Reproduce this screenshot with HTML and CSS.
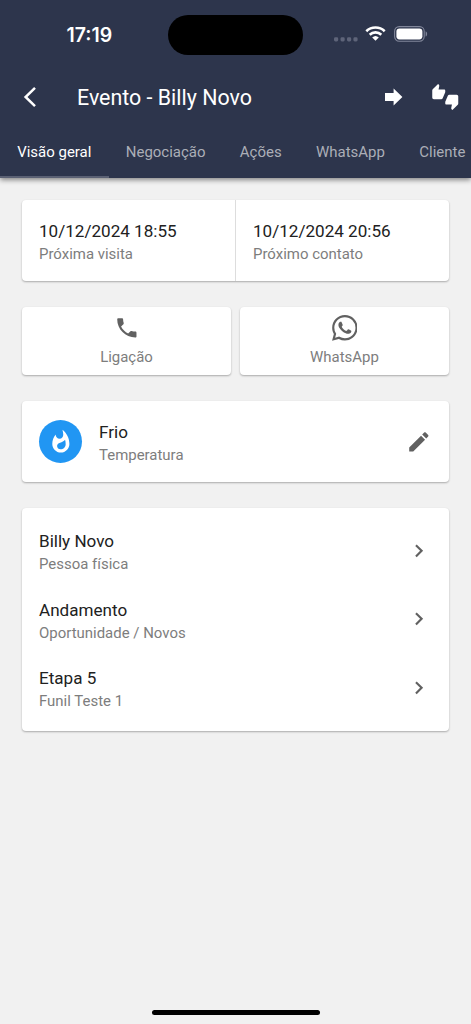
FILE: index.html
```html
<!DOCTYPE html>
<html lang="pt-BR">
<head>
<meta charset="utf-8">
<title>Evento - Billy Novo</title>
<link rel="stylesheet" href="styles.css">
</head>
<body>
<div class="screen">
  <header class="header">
    <div class="status">
      <span class="clock">17:19</span>
      <span class="island"></span>
      <span class="indicators">
        <svg class="dots" viewBox="0 0 24 5"><rect x="0" y=".3" width="4.2" height="4.2" rx="1.4"/><rect x="6.5" y=".3" width="4.2" height="4.2" rx="1.4"/><rect x="13" y=".3" width="4.2" height="4.2" rx="1.4"/><rect x="19.4" y=".3" width="4.2" height="4.2" rx="1.4"/></svg>
        <svg class="wifi" viewBox="0 0 21 15"><path d="M1.3 5.2a13.3 13.3 0 0 1 18.4 0M4.7 8.7a8.4 8.4 0 0 1 11.6 0" fill="none" stroke="#fff" stroke-width="2.6"/><path d="M10.5 14.8 7.2 11.5a4.8 4.8 0 0 1 6.6 0z" fill="#fff"/></svg>
        <svg class="battery" viewBox="0 0 34 16"><rect x=".6" y=".6" width="29.6" height="14.6" rx="4.6" fill="none" stroke="#81869a" stroke-width="1.1"/><rect x="2.4" y="2.4" width="26" height="11" rx="3.1" fill="#fff"/><path d="M31.6 5.2c2 .7 2 4.7 0 5.4z" fill="#81869a"/></svg>
      </span>
    </div>
    <div class="appbar">
      <svg class="back" viewBox="0 0 14 22"><path d="M12 1.8 2.6 11 12 20.2" fill="none" stroke="#fff" stroke-width="2.5"/></svg>
      <h1 class="title">Evento - Billy Novo</h1>
      <svg class="forward" viewBox="0 0 18 18"><path d="M0 5h8.6V.5L17.4 9l-8.8 8.5V13H0z" fill="#fff"/></svg>
      <svg class="thumbs" viewBox="0 0 24 24"><path fill="#fff" d="M12 6c0-.55-.45-1-1-1H5.82l.66-3.18.02-.23c0-.31-.13-.59-.33-.8L5.38 0 .44 4.94C.17 5.21 0 5.59 0 6v6.5c0 .83.67 1.5 1.5 1.5h6.75c.62 0 1.15-.38 1.38-.91l2.26-5.29c.07-.17.11-.36.11-.55V6zm10.500 4h-6.750c-.62 0-1.150.38-1.380.91l-2.260 5.290c-.07.17-.11.36-.11.55V18c0 .55.45 1 1 1h5.180l-.66 3.180-.02.24c0 .31.13.59.33.8l.79.78 4.940-4.940c.27-.27.44-.65.44-1.060v-6.500c0-.83-.67-1.500-1.500-1.500z"/></svg>
    </div>
    <nav class="tabs">
      <a class="tab active">Visão geral</a>
      <a class="tab">Negociação</a>
      <a class="tab">Ações</a>
      <a class="tab">WhatsApp</a>
      <a class="tab">Cliente</a>
    </nav>
  </header>
  <main class="content">
    <section class="card dates">
      <div class="date"><p class="primary">10/12/2024 18:55</p><p class="secondary">Próxima visita</p></div>
      <div class="date"><p class="primary">10/12/2024 20:56</p><p class="secondary">Próximo contato</p></div>
    </section>
    <div class="actions">
      <div class="card action">
        <svg class="icon" viewBox="0 0 24 24"><path d="M6.620 10.790c1.440 2.830 3.760 5.140 6.590 6.590l2.200-2.200c.27-.27.67-.36 1.020-.24 1.120.37 2.330.57 3.570.57.55 0 1 .45 1 1V20c0 .55-.45 1-1 1-9.390 0-17-7.610-17-17 0-.55.45-1 1-1h3.500c.55 0 1 .45 1 1 0 1.250.2 2.450.57 3.570.11.35.03.74-.25 1.020l-2.200 2.200z"/></svg>
        <p class="secondary">Ligação</p>
      </div>
      <div class="card action">
        <svg class="icon" viewBox="0 0 24 24"><path d="M17.472 14.382c-.297-.149-1.758-.867-2.030-.967-.273-.099-.471-.148-.67.150-.197.297-.767.966-.94 1.164-.173.199-.347.223-.644.075-.297-.150-1.255-.463-2.390-1.475-.883-.788-1.480-1.761-1.653-2.059-.173-.297-.018-.458.130-.606.134-.133.298-.347.446-.520.149-.174.198-.298.298-.497.099-.198.050-.371-.025-.520-.075-.149-.669-1.612-.916-2.207-.242-.579-.487-.500-.669-.510-.173-.008-.371-.010-.570-.010-.198 0-.520.074-.792.372-.272.297-1.040 1.016-1.040 2.479 0 1.462 1.065 2.875 1.213 3.074.149.198 2.096 3.200 5.077 4.487.709.306 1.262.489 1.694.625.712.227 1.360.195 1.871.118.571-.085 1.758-.719 2.006-1.413.248-.694.248-1.289.173-1.413-.074-.124-.272-.198-.570-.347m-5.421 7.403h-.004a9.870 9.870 0 0 1-5.031-1.378l-.361-.214-3.741.982.998-3.648-.235-.374a9.860 9.860 0 0 1-1.510-5.260c.001-5.450 4.436-9.884 9.888-9.884 2.640 0 5.122 1.030 6.988 2.898a9.825 9.825 0 0 1 2.893 6.994c-.003 5.450-4.437 9.884-9.885 9.884m8.413-18.297A11.815 11.815 0 0 0 12.050 0C5.495 0 .160 5.335.157 11.892c0 2.096.547 4.142 1.588 5.945L.057 24l6.305-1.654a11.882 11.882 0 0 0 5.683 1.448h.005c6.554 0 11.890-5.335 11.893-11.893a11.821 11.821 0 0 0-3.480-8.413z"/></svg>
        <p class="secondary">WhatsApp</p>
      </div>
    </div>
    <section class="card temperature">
      <span class="avatar"><svg viewBox="0 0 24 24"><path d="M13.500.67s.74 2.650.74 4.800c0 2.060-1.350 3.730-3.410 3.730-2.070 0-3.630-1.670-3.630-3.730l.03-.36C5.210 7.510 4 10.620 4 14c0 4.420 3.580 8 8 8s8-3.580 8-8C20 8.610 17.410 3.800 13.500.67zM11.710 19c-1.780 0-3.220-1.400-3.220-3.140 0-1.620 1.050-2.760 2.810-3.120 1.770-.36 3.600-1.210 4.620-2.580.39 1.290.59 2.650.59 4.040 0 2.650-2.150 4.800-4.800 4.800z"/></svg></span>
      <div class="text"><p class="primary">Frio</p><p class="secondary">Temperatura</p></div>
      <svg class="icon" viewBox="0 0 24 24"><path d="M3 17.250V21h3.750L17.810 9.940l-3.750-3.750L3 17.250zM20.710 7.040c.39-.39.39-1.020 0-1.410l-2.340-2.340c-.39-.39-1.020-.39-1.410 0l-1.830 1.830 3.750 3.750 1.830-1.830z"/></svg>
    </section>
    <section class="card list">
      <div class="row">
        <div class="text"><p class="primary">Billy Novo</p><p class="secondary">Pessoa física</p></div>
        <svg class="icon" viewBox="0 0 24 24"><path d="M10 6 8.590 7.410 13.170 12l-4.580 4.590L10 18l6-6z"/></svg>
      </div>
      <div class="row">
        <div class="text"><p class="primary">Andamento</p><p class="secondary">Oportunidade / Novos</p></div>
        <svg class="icon" viewBox="0 0 24 24"><path d="M10 6 8.590 7.410 13.170 12l-4.580 4.590L10 18l6-6z"/></svg>
      </div>
      <div class="row">
        <div class="text"><p class="primary">Etapa 5</p><p class="secondary">Funil Teste 1</p></div>
        <svg class="icon" viewBox="0 0 24 24"><path d="M10 6 8.590 7.410 13.170 12l-4.580 4.590L10 18l6-6z"/></svg>
      </div>
    </section>
  </main>
  <div class="home"></div>
</div>
</body>
</html>
```
FILE: styles.css
```css
* { box-sizing: border-box; }
body { margin: 0; background: #f1f1f1; font-family: Roboto, sans-serif; }
p, h1 { margin: 0; }
svg { display: block; flex: none; }

.screen { width: 471px; height: 1024px; display: flex; flex-direction: column; overflow: hidden; }

.header { height: 178px; flex: none; background: #2d354c; color: #fff; display: flex; flex-direction: column; box-shadow: 0 2px 5px rgba(0, 0, 0, .45); }
.status { height: 69px; flex: none; display: grid; grid-template-columns: 168px 135px 1fr; align-items: center; }
.clock { font: 600 19.5px/24px Inter, sans-serif; padding-left: 66.5px; letter-spacing: 0; }
.island { height: 40px; border-radius: 20px; background: #000; }
.indicators { display: flex; align-items: center; padding-left: 31px; }
.dots { width: 24px; height: 5px; margin-top: 9px; fill: #5e6479; }
.wifi { width: 21px; height: 15px; margin-left: 7px; margin-top: -2px; }
.battery { width: 34px; height: 16px; margin-left: 8px; margin-top: -1px; }

.appbar { height: 56px; flex: none; display: flex; align-items: center; padding: 0 12.5px 0 23px; }
.back { width: 14px; height: 22px; }
.title { flex: 1; margin-left: 40px; padding-top: 2px; font-size: 21.4px; line-height: 26px; font-weight: 400; }
.forward { width: 18px; height: 18px; }
.thumbs { width: 26.5px; height: 26px; margin-left: 29px; margin-top: -1px; }

.tabs { flex: 1; display: flex; overflow: hidden; }
.tab { flex: none; padding: 17px 17.2px 0; font-size: 14.98px; line-height: 20px; color: #abaeb7; white-space: nowrap; }
.tab.active { color: #fff; border-bottom: 2px solid #5b6174; }

.content { flex: 1; padding: 21.5px 22px 0; display: flex; flex-direction: column; gap: 26px; }
.card { background: #fff; border-radius: 4px; box-shadow: 0 1px 2px rgba(0, 0, 0, .3); }
.primary { font-size: 17.08px; line-height: 23px; color: #212121; }
.secondary { font-size: 14.96px; line-height: 23px; color: #7d7d7d; }
.icon { width: 25.7px; height: 25.7px; fill: #616161; }

.dates { height: 81.5px; display: grid; grid-template-columns: 213px 1fr; }
.date { padding: 20.5px 17px 0; }
.date + .date { border-left: 1px solid #ddd; }

.actions { display: grid; grid-template-columns: 1fr 1fr; gap: 9px; }
.action { height: 68px; padding-top: 8px; display: flex; flex-direction: column; align-items: center; gap: 5px; }

.temperature { height: 81px; display: flex; align-items: center; padding: 0 17px; }
.avatar { width: 43px; height: 43px; border-radius: 50%; background: #2196f3; display: grid; place-items: center; margin-right: 17px; }
.avatar svg { width: 25.7px; height: 25.7px; fill: #fff; }
.text { flex: 1; padding-top: 4.5px; }

.list { padding: 8.5px 17px; }
.row { height: 68.500px; display: flex; align-items: center; }

.home { width: 168px; height: 5px; border-radius: 3px; background: #000; margin: 0 auto 9px; }
```
